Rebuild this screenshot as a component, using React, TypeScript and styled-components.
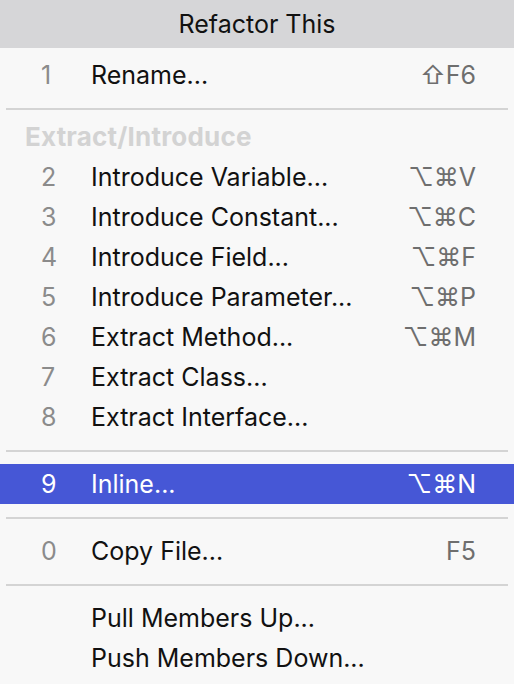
import React from "react";
import styled, { createGlobalStyle } from "styled-components";

const GlobalStyle = createGlobalStyle`
  html, body {
    margin: 0;
    padding: 0;
    background: #f8f8f8;
  }
  body {
    font-family: Inter, "Noto Sans", "DejaVu Sans", sans-serif;
    -webkit-font-smoothing: antialiased;
  }
`;

const Popup = styled.div`
  width: 514px;
  height: 684px;
  background: #f8f8f8;
  overflow: hidden;
`;

const Title = styled.div`
  height: 48px;
  display: flex;
  align-items: center;
  justify-content: center;
  background: #d6d6d8;
  color: #111;
  font-size: 25px;
`;

const List = styled.div`
  padding-top: 7px;
  display: flex;
  flex-direction: column;
`;

const Row = styled.div<{ $active?: boolean }>`
  height: 40px;
  display: grid;
  grid-template-columns: 50px 1fr auto;
  align-items: center;
  padding: 0 38px 0 41px;
  font-size: 25px;
  background: ${(p) => (p.$active ? "#4657d6" : "transparent")};
  color: ${(p) => (p.$active ? "#fff" : "#111")};
`;

const Num = styled.span<{ $active?: boolean }>`
  color: ${(p) => (p.$active ? "#fff" : "#8b8b8b")};
`;

const Shortcut = styled.span<{ $active?: boolean }>`
  color: ${(p) => (p.$active ? "#fff" : "#6e6e6e")};
  font-family: Inter, "DejaVu Sans", sans-serif;
`;

const Sep = styled.div`
  padding: 13px 6px 12px;
  &::after {
    content: "";
    display: block;
    height: 2px;
    background: #d4d4d4;
  }
`;

const Heading = styled.div`
  height: 28px;
  margin-bottom: 7px;
  display: flex;
  align-items: center;
  padding-left: 25px;
  font-size: 26px;
  font-weight: 700;
  letter-spacing: 0.2px;
  color: #d3d3d3;
`;

type Item = { n?: string; label: string; shortcut?: string; active?: boolean };

const Entry = ({ n, label, shortcut, active }: Item) => (
  <Row $active={active}>
    <Num $active={active}>{n}</Num>
    <span>{label}</span>
    <Shortcut $active={active}>{shortcut}</Shortcut>
  </Row>
);

const introduce: Item[] = [
  { n: "2", label: "Introduce Variable...", shortcut: "⌥⌘V" },
  { n: "3", label: "Introduce Constant...", shortcut: "⌥⌘C" },
  { n: "4", label: "Introduce Field...", shortcut: "⌥⌘F" },
  { n: "5", label: "Introduce Parameter...", shortcut: "⌥⌘P" },
  { n: "6", label: "Extract Method...", shortcut: "⌥⌘M" },
  { n: "7", label: "Extract Class..." },
  { n: "8", label: "Extract Interface..." },
];

export default function App() {
  return (
    <>
      <GlobalStyle />
      <Popup>
        <Title>Refactor This</Title>
        <List>
          <Entry n="1" label="Rename..." shortcut="⇧F6" />
          <Sep />
          <Heading>Extract/Introduce</Heading>
          {introduce.map((it) => (
            <Entry key={it.label} {...it} />
          ))}
          <Sep />
          <Entry n="9" label="Inline..." shortcut="⌥⌘N" active />
          <Sep />
          <Entry n="0" label="Copy File..." shortcut="F5" />
          <Sep />
          <Entry label="Pull Members Up..." />
          <Entry label="Push Members Down..." />
        </List>
      </Popup>
    </>
  );
}
